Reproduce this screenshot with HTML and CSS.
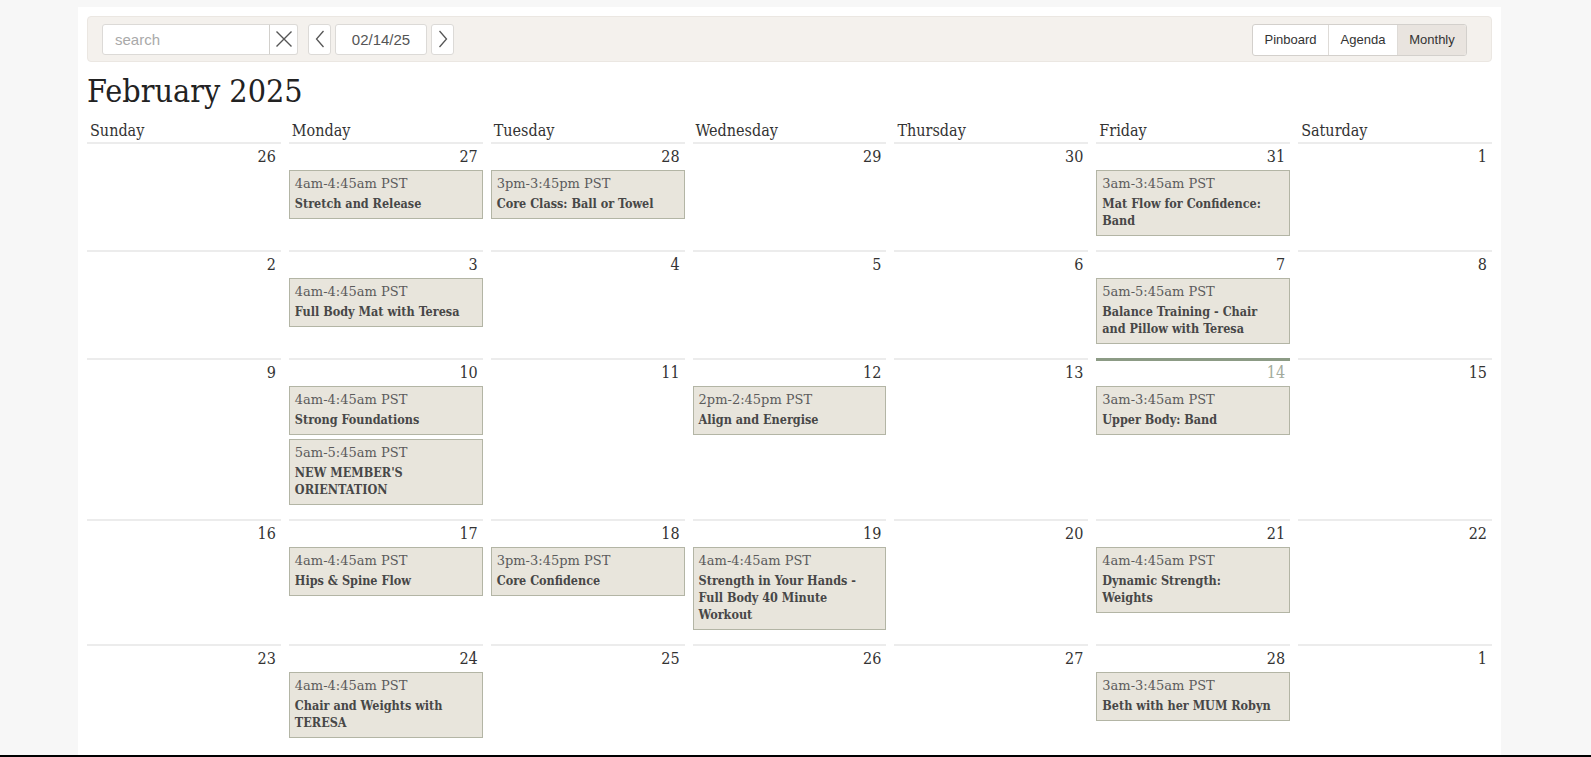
FILE: index.html
```html
<!DOCTYPE html>
<html lang="en">
<head>
<meta charset="utf-8">
<title>February 2025</title>
<link rel="stylesheet" href="styles.css">
</head>
<body>
<div class="page">
  <div class="toolbar">
    <div class="tools">
      <div class="search">
        <span class="search-field">search</span>
        <span class="clear"><svg width="18" height="18" viewBox="0 0 18 18"><path d="M1.5 1.5 L16.5 16.5 M16.5 1.5 L1.5 16.5" stroke="#555" stroke-width="1.4" fill="none"/></svg></span>
      </div>
      <span class="nav"><svg width="10" height="18" viewBox="0 0 10 18"><path d="M8.5 1 L1.5 9 L8.5 17" stroke="#555" stroke-width="1.3" fill="none"/></svg></span>
      <span class="date">02/14/25</span>
      <span class="nav"><svg width="10" height="18" viewBox="0 0 10 18"><path d="M1.5 1 L8.5 9 L1.5 17" stroke="#555" stroke-width="1.3" fill="none"/></svg></span>
    </div>
    <div class="views">
      <span class="view view-pin">Pinboard</span>
      <span class="view view-agenda">Agenda</span>
      <span class="view active">Monthly</span>
    </div>
  </div>

  <h1 class="title">February 2025</h1>

  <div class="cal">
    <div class="dow">Sunday</div>
    <div class="dow">Monday</div>
    <div class="dow">Tuesday</div>
    <div class="dow">Wednesday</div>
    <div class="dow">Thursday</div>
    <div class="dow">Friday</div>
    <div class="dow">Saturday</div>

    <div class="day"><div class="num">26</div></div>
    <div class="day"><div class="num">27</div>
      <div class="ev"><div class="time">4am-4:45am PST</div><div class="name">Stretch and Release</div></div></div>
    <div class="day"><div class="num">28</div>
      <div class="ev"><div class="time">3pm-3:45pm PST</div><div class="name">Core Class: Ball or Towel</div></div></div>
    <div class="day"><div class="num">29</div></div>
    <div class="day"><div class="num">30</div></div>
    <div class="day"><div class="num">31</div>
      <div class="ev"><div class="time">3am-3:45am PST</div><div class="name">Mat Flow for Confidence:<br>Band</div></div></div>
    <div class="day"><div class="num">1</div></div>

    <div class="day"><div class="num">2</div></div>
    <div class="day"><div class="num">3</div>
      <div class="ev"><div class="time">4am-4:45am PST</div><div class="name">Full Body Mat with Teresa</div></div></div>
    <div class="day"><div class="num">4</div></div>
    <div class="day"><div class="num">5</div></div>
    <div class="day"><div class="num">6</div></div>
    <div class="day"><div class="num">7</div>
      <div class="ev"><div class="time">5am-5:45am PST</div><div class="name">Balance Training - Chair<br>and Pillow with Teresa</div></div></div>
    <div class="day"><div class="num">8</div></div>

    <div class="day"><div class="num">9</div></div>
    <div class="day"><div class="num">10</div>
      <div class="ev"><div class="time">4am-4:45am PST</div><div class="name">Strong Foundations</div></div>
      <div class="ev"><div class="time">5am-5:45am PST</div><div class="name">NEW MEMBER'S<br>ORIENTATION</div></div></div>
    <div class="day"><div class="num">11</div></div>
    <div class="day"><div class="num">12</div>
      <div class="ev"><div class="time">2pm-2:45pm PST</div><div class="name">Align and Energise</div></div></div>
    <div class="day"><div class="num">13</div></div>
    <div class="day today"><div class="num">14</div>
      <div class="ev"><div class="time">3am-3:45am PST</div><div class="name">Upper Body: Band</div></div></div>
    <div class="day"><div class="num">15</div></div>

    <div class="day"><div class="num">16</div></div>
    <div class="day"><div class="num">17</div>
      <div class="ev"><div class="time">4am-4:45am PST</div><div class="name">Hips &amp; Spine Flow</div></div></div>
    <div class="day"><div class="num">18</div>
      <div class="ev"><div class="time">3pm-3:45pm PST</div><div class="name">Core Confidence</div></div></div>
    <div class="day"><div class="num">19</div>
      <div class="ev"><div class="time">4am-4:45am PST</div><div class="name">Strength in Your Hands -<br>Full Body 40 Minute<br>Workout</div></div></div>
    <div class="day"><div class="num">20</div></div>
    <div class="day"><div class="num">21</div>
      <div class="ev"><div class="time">4am-4:45am PST</div><div class="name">Dynamic Strength:<br>Weights</div></div></div>
    <div class="day"><div class="num">22</div></div>

    <div class="day"><div class="num">23</div></div>
    <div class="day"><div class="num">24</div>
      <div class="ev"><div class="time">4am-4:45am PST</div><div class="name">Chair and Weights with<br>TERESA</div></div></div>
    <div class="day"><div class="num">25</div></div>
    <div class="day"><div class="num">26</div></div>
    <div class="day"><div class="num">27</div></div>
    <div class="day"><div class="num">28</div>
      <div class="ev"><div class="time">3am-3:45am PST</div><div class="name">Beth with her MUM Robyn</div></div></div>
    <div class="day"><div class="num">1</div></div>
  </div>
</div>
<div class="screen-edge"></div>
</body>
</html>
```
FILE: styles.css
```css
html, body {
  margin: 0;
  padding: 0;
  background: #f7f7f7;
  overflow: hidden;
}
body {
  font-family: "DejaVu Serif Condensed", "DejaVu Serif", serif;
  font-stretch: condensed;
  color: #333;
}
.page {
  margin: 7px 0 0 78px;
  width: 1405px;
  padding: 9px 9px 40px 9px;
  background: #fff;
  min-height: 800px;
}
.toolbar {
  display: flex;
  justify-content: space-between;
  align-items: center;
  height: 44px;
  padding: 0 24px 0 14px;
  background: #f4f1ed;
  border: 1px solid #ebe7e2;
  border-radius: 4px;
  font-family: "Liberation Sans", Arial, sans-serif;
  font-stretch: normal;
}
.tools {
  display: flex;
  align-items: center;
  gap: 4px;
}
.search {
  display: flex;
  margin-right: 6px;
}
.search-field {
  width: 154px;
  height: 29px;
  line-height: 29px;
  padding-left: 12px;
  border: 1px solid #dcdad7;
  border-radius: 3px 0 0 3px;
  background: #fff;
  color: #a9a9a9;
  font-size: 15px;
}
.clear {
  width: 27px;
  height: 29px;
  display: flex;
  align-items: center;
  justify-content: center;
  border: 1px solid #dcdad7;
  border-left: 1px solid #d2d0cc;
  border-radius: 0 3px 3px 0;
  background: #fff;
  margin-left: -1px;
}
.nav {
  width: 21px;
  height: 29px;
  display: flex;
  align-items: center;
  justify-content: center;
  border: 1px solid #dcdad7;
  border-radius: 3px;
  background: #fff;
}
.date {
  width: 90px;
  height: 29px;
  line-height: 29px;
  text-align: center;
  border: 1px solid #dcdad7;
  border-radius: 3px;
  background: #fff;
  color: #555;
  font-size: 15px;
}
.views {
  display: flex;
  border: 1px solid #d3d0cc;
  border-radius: 3px;
  background: #fff;
  overflow: hidden;
  margin-top: 2px;
}
.view {
  height: 30px;
  line-height: 30px;
  text-align: center;
  font-size: 13px;
  color: #333;
  border-left: 1px solid #dedbd7;
}
.view:first-child { border-left: 0; }
.view-pin { width: 75px; }
.view-agenda { width: 68px; }
.view.active {
  width: 68px;
  background: #e9e4df;
}
.title {
  margin: 10px 0 10px 0;
  font-size: 32px;
  line-height: 38px;
  font-weight: normal;
  color: #222;
}
.cal {
  display: grid;
  grid-template-columns: repeat(7, 1fr);
  column-gap: 8px;
}
.dow {
  font-size: 16px;
  line-height: 20px;
  padding: 1px 3px 1px;
  color: #333;
}
.day {
  border-top: 2px solid #ececec;
  padding-bottom: 14px;
}
.num {
  text-align: right;
  padding: 3px 5px 0;
  height: 19px;
  font-size: 16px;
  line-height: 20px;
  color: #333;
}
.today {
  border-top: 3px solid #8c9b85;
}
.today .num {
  color: #a3ab9c;
  padding-top: 2px;
}
.ev {
  margin-top: 4px;
  padding: 4px 5px 6px;
  background: #e8e5dc;
  border: 1px solid #b3b5a5;
  font-size: 12.5px;
  line-height: 17px;
}
.ev + .ev { margin-top: 4px; }
.time {
  font-family: "DejaVu Serif", serif;
  font-stretch: normal;
  font-size: 13px;
  color: #5b5b5b;
  margin-bottom: 3px;
}
.name {
  font-weight: bold;
  color: #474747;
}
.screen-edge {
  position: fixed;
  left: 0;
  right: 0;
  bottom: 0;
  height: 2px;
  background: #000;
}
```
